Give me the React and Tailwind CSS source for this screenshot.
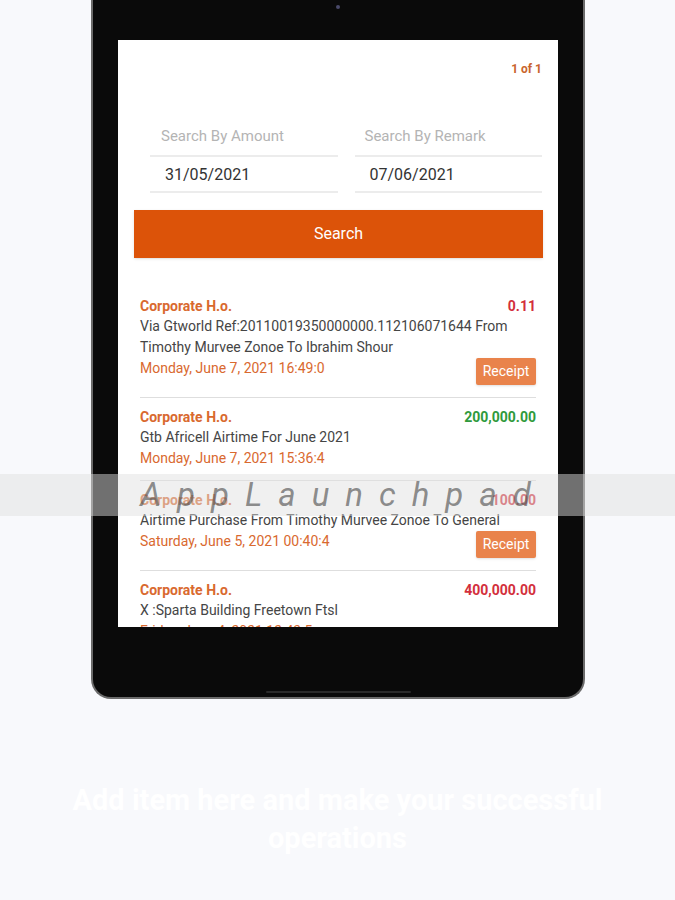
import React from "react";

const items = [
  {
    amount: "0.11",
    amountColor: "text-[#d32f3c]",
    desc: "Via Gtworld Ref:20110019350000000.112106071644 From Timothy Murvee Zonoe To Ibrahim Shour",
    date: "Monday, June 7, 2021 16:49:0",
    receipt: true,
  },
  {
    amount: "200,000.00",
    amountColor: "text-[#2f9a3c]",
    desc: "Gtb Africell Airtime For June 2021",
    date: "Monday, June 7, 2021 15:36:4",
    receipt: false,
  },
  {
    amount: "100.00",
    amountColor: "text-[#d32f3c]",
    desc: "Airtime Purchase From Timothy Murvee Zonoe To General",
    date: "Saturday, June 5, 2021 00:40:4",
    receipt: true,
  },
  {
    amount: "400,000.00",
    amountColor: "text-[#d32f3c]",
    desc: "X :Sparta Building Freetown Ftsl",
    date: "Friday, June 4, 2021 12:43:5",
    receipt: false,
  },
];

function Item({ it, last }) {
  return (
    <div className={`pt-[9px] ${it.receipt ? "pb-[12px]" : "pb-[11px]"} ${last ? "" : "border-b border-[#dedede]"}`}>
      <div className="flex justify-between items-center h-[20px] text-[14px] font-bold">
        <span className="text-[#d9692f]">Corporate H.o.</span>
        <span className={it.amountColor}>{it.amount}</span>
      </div>
      <div className="text-[14px] leading-[21px] text-[#454545]">{it.desc}</div>
      <div className="flex justify-between items-start">
        <span className="text-[14px] leading-[21px] text-[#d9692f]">{it.date}</span>
        {it.receipt && (
          <span className="h-[27px] w-[60px] flex items-center justify-center rounded-[2px] bg-[#e9834b] text-white text-[14px] shadow-sm">
            Receipt
          </span>
        )}
      </div>
    </div>
  );
}

export default function App() {
  return (
    <div
      className="relative w-[675px] h-[900px] overflow-hidden bg-[#f8f9fc]"
      style={{ fontFamily: "Roboto, 'Noto Sans', sans-serif" }}
    >
      {/* tablet frame */}
      <div className="ml-[91px] w-[494px] h-[699px] bg-[#0a0a0a] border-2 border-t-0 border-[#6b6b6b] rounded-b-[20px] flex flex-col items-center relative">
        <div className="absolute top-[5px] left-[243px] w-[4px] h-[4px] rounded-full bg-[#4a4a6a]" />
        <div className="mt-[40px] w-[440px] h-[587px] shrink-0 bg-white overflow-hidden">
          <div className="pt-[21px] pr-[16px] flex justify-end">
            <span className="text-[12px] leading-[16px] font-bold text-[#c9642c]">1 of 1</span>
          </div>
          <div className="mt-[41px] ml-[32px] mr-[16px] grid grid-cols-2 gap-x-[17px]">
            <div className="h-[39px] flex items-center pl-[11px] border-b-2 border-[#ececec] text-[15px] text-[#b4b4b4]">
              Search By Amount
            </div>
            <div className="h-[39px] flex items-center pl-[10px] border-b-2 border-[#ececec] text-[15px] text-[#b4b4b4]">
              Search By Remark
            </div>
            <div className="h-[36px] flex items-center pt-[2px] pl-[15px] border-b-2 border-[#ececec] text-[16px] text-[#333333]">
              31/05/2021
            </div>
            <div className="h-[36px] flex items-center pt-[2px] pl-[15px] border-b-2 border-[#ececec] text-[16px] text-[#333333]">
              07/06/2021
            </div>
          </div>
          <div className="mt-[17px] ml-[16px] mr-[15px] h-[48px] bg-[#dc5309] flex items-center justify-center text-white text-[16px] shadow-sm">
            Search
          </div>
          <div className="mt-[29px] px-[22px]">
            {items.map((it, i) => (
              <Item key={i} it={it} last={i === items.length - 1} />
            ))}
          </div>
        </div>
        <div className="flex-1" />
        <div className="w-[145px] h-[2px] mb-[4px] bg-[#2a2a2a] rounded-full" />
      </div>

      {/* bottom caption */}
      <div className="mt-[82px] mx-auto w-[620px] text-center text-[29px] leading-[38px] font-bold text-white">
        Add item here and make your successful operations
      </div>

      {/* watermark band */}
      <div className="absolute left-0 top-[474px] w-[675px] h-[42px] bg-[rgba(224,224,224,0.48)] flex items-center justify-center pointer-events-none">
        <span className="italic text-[33px] tracking-[16px] text-[rgba(70,70,70,0.6)] ml-[12px]">
          AppLaunchpad
        </span>
      </div>
    </div>
  );
}
